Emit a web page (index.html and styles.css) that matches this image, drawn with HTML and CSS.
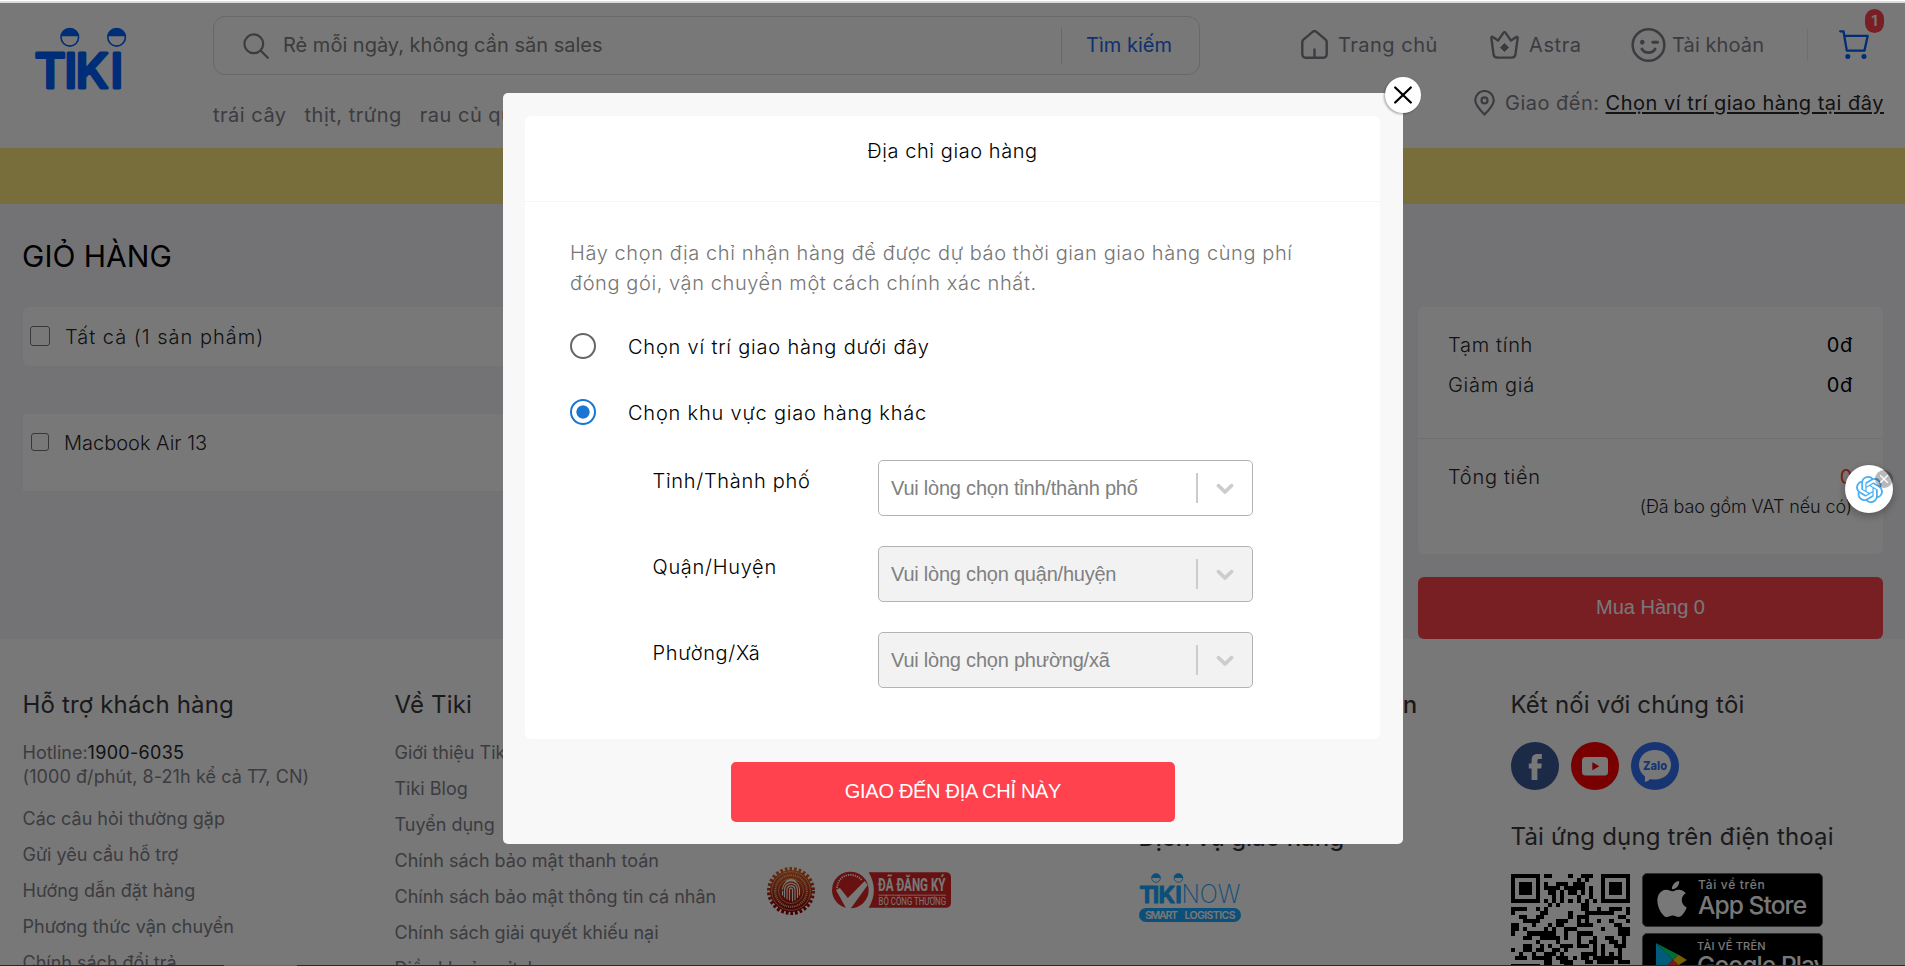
FILE: index.html
```html
<!DOCTYPE html>
<html lang="vi">
<head>
<meta charset="utf-8">
<title>Giỏ hàng | Tiki</title>
<link rel="stylesheet" href="styles.css">
</head>
<body>
<div class="page">
  <header class="header">
    <svg class="logo" viewBox="0 0 90 61" width="90" height="61">
      <g class="wordmark">
        <text class="wm" x="-1.500 28.300 39.500 74.200" y="59.500">TIKI</text>
      </g>
      <g fill="none" stroke="#0060ff" stroke-width="1.6">
        <circle cx="33.8" cy="9.3" r="8.8"/><circle cx="80.6" cy="9.3" r="8.8"/>
      </g>
      <path fill="#0060ff" d="M24.6 8.3a9.3 9.3 0 0 1 18.4 0zM71.4 8.3a9.3 9.3 0 0 1 18.4 0z"/>
    </svg>
    <div class="search-col">
      <div class="search">
        <svg class="search-icon" viewBox="0 0 26 26" width="26" height="26" fill="none" stroke="#808089" stroke-width="2.2" stroke-linecap="round"><circle cx="10.8" cy="10.8" r="9.4"/><path d="M17.8 17.8l7 7"/></svg>
        <span class="search-text">Rẻ mỗi ngày, không cần săn sales</span>
        <span class="search-btn">Tìm kiếm</span>
      </div>
      <div class="hot"><span>trái cây</span><span>thịt, trứng</span><span>rau củ quả</span></div>
    </div>
    <div class="right-col">
      <nav class="nav">
        <svg class="i-home" viewBox="0 0 27 29" width="27" height="29" fill="none" stroke="#808089" stroke-width="2.4" stroke-linejoin="round" stroke-linecap="round"><path d="M1.3 12.3c0-1 .4-1.900 1.100-2.600L11.300 2.100a3.300 3.300 0 0 1 4.400 0l8.900 7.600c.7.700 1.100 1.600 1.100 2.600v12.200a3.200 3.200 0 0 1-3.200 3.200h-18a3.200 3.200 0 0 1-3.200-3.200zM13.500 19.500v7.500"/></svg>
        <span class="t-home">Trang chủ</span>
        <svg class="i-astra" viewBox="0 0 29 28" width="29" height="28" fill="none" stroke="#808089" stroke-width="2.4" stroke-linejoin="round"><path d="M1.300 6.600c0-.9.900-1.100 1.500-.6l5.200 3.600 5.400-7.700c.5-.8 1.700-.8 2.200 0l5.400 7.700 5.200-3.600c.6-.5 1.500-.300 1.500.6l-2.200 16.500a4 4 0 0 1-4 3.500h-14a4 4 0 0 1-4-3.500z"/><path fill="#808089" stroke-width="1" d="M14.500 12.500l4 4-4 4-4-4z"/></svg>
        <span class="t-astra">Astra</span>
        <svg class="i-face" viewBox="0 0 36 36" width="35" height="36" fill="none" stroke="#808089" stroke-width="2.6" stroke-linecap="round"><circle cx="18" cy="18" r="16.300"/><path d="M11.300 22.200c2.600 4.800 10.800 4.800 13.400 0" stroke-width="3"/><path d="M22.500 15.200h4.800" stroke-width="3"/><ellipse cx="11.600" cy="15.200" rx="2.300" ry="2.500" fill="#808089" stroke="none"/></svg>
        <span class="t-acc">Tài khoản</span>
        <i class="nav-sep"></i>
        <span class="cart">
          <svg viewBox="0 0 30 29" width="30" height="29" fill="none" stroke="#0060ff" stroke-width="2.300" stroke-linejoin="round" stroke-linecap="round"><path d="M1.200 1.300h3.300l3.300 19.300h17.700l3.200-14.800H5.500"/><circle cx="8.800" cy="26.500" r="1.400" fill="#0060ff"/><circle cx="25" cy="26.500" r="1.400" fill="#0060ff"/></svg>
          <b class="badge">1</b>
        </span>
      </nav>
      <div class="location">
        <svg viewBox="0 0 21 26" width="21" height="26" fill="none" stroke="#808089" stroke-width="2.200"><path stroke-linejoin="round" d="M10.500 24.600C4.500 18.500 1.200 14.500 1.200 10.300a9.300 9.300 0 0 1 18.600 0c0 4.200-3.300 8.200-9.300 14.300z"/><circle cx="10.500" cy="10.400" r="3"/></svg>
        <span class="loc-label">Giao đến:</span><span class="loc-link">Chọn ví trí giao hàng tại đây</span>
      </div>
    </div>
  </header>
  <div class="banner"></div>
  <main class="main">
    <h1 class="title">GIỎ HÀNG</h1>
    <div class="cols">
      <div class="items">
        <div class="row row-all"><i class="check check-lg"></i><span class="all-text">Tất cả (1 sản phẩm)</span></div>
        <div class="row row-item"><i class="check"></i><span class="item-text">Macbook Air 13</span></div>
      </div>
      <div class="side">
        <div class="summary">
          <div class="line"><span>Tạm tính</span><b>0đ</b></div>
          <div class="line line-2"><span>Giảm giá</span><b>0đ</b></div>
          <div class="total">
            <div class="line"><span>Tổng tiền</span><b class="red">0</b></div>
            <p class="vat">(Đã bao gồm VAT nếu có)</p>
          </div>
        </div>
        <div class="buy">Mua Hàng 0</div>
      </div>
    </div>
  </main>
  <footer class="footer">
    <section>
      <h2 class="ft">Hỗ trợ khách hàng</h2>
      <div class="hotline"><p><span>Hotline:</span><b>1900-6035</b></p><p class="hours">(1000 đ/phút, 8-21h kể cả T7, CN)</p></div>
      <ul class="links links-1"><li>Các câu hỏi thường gặp</li><li>Gửi yêu cầu hỗ trợ</li><li>Hướng dẫn đặt hàng</li><li>Phương thức vận chuyển</li><li>Chính sách đổi trả</li></ul>
    </section>
    <section>
      <h2 class="ft">Về Tiki</h2>
      <ul class="links links-2"><li>Giới thiệu Tiki</li><li>Tiki Blog</li><li>Tuyển dụng</li><li>Chính sách bảo mật thanh toán</li><li>Chính sách bảo mật thông tin cá nhân</li><li>Chính sách giải quyết khiếu nại</li><li>Điều khoản sử dụng</li></ul>
    </section>
    <section class="certs">
      <svg viewBox="0 0 48 48" width="48" height="48">
        <defs><linearGradient id="seal" x1="0" y1="0" x2="0" y2="1"><stop offset="0" stop-color="#e0641c"/><stop offset=".5" stop-color="#b5320f"/><stop offset="1" stop-color="#8a0000"/></linearGradient></defs>
        <circle cx="24" cy="24" r="21" fill="url(#seal)"/>
        <circle cx="24" cy="24" r="22" fill="none" stroke="url(#seal)" stroke-width="4" stroke-dasharray="2.700 1.910"/>
        <circle cx="24" cy="24" r="19.300" fill="none" stroke="#f0d5c8" stroke-width=".6"/>
        <circle cx="24" cy="24" r="15.800" fill="none" stroke="#e8b8a0" stroke-width="2.200" stroke-dasharray="1 .9"/>
        <circle cx="24" cy="24" r="12.500" fill="none" stroke="#f0d5c8" stroke-width=".6"/>
        <g fill="none" stroke="#fff" stroke-width="1.100" stroke-linecap="round"><path d="M15.500 22c1-11 16-11 17 0v6M17.500 30v-7c0-9 13-9 13 0v7.500M20 32v-9c0-5.500 8-5.500 8 0v10M22.500 33v-10c0-2.500 3-2.500 3 0v11M15.500 24.500v3.500M19 14.500c3-2.300 7-2.300 10 0"/></g>
      </svg>
      <svg viewBox="0 0 120 46" width="119" height="46">
        <path fill="#dc2626" d="M37 5h78a5 5 0 0 1 5 5v26a5 5 0 0 1-5 5H37c7-12 7-24 0-36z"/>
        <circle cx="18.500" cy="23" r="18.500" fill="#dc2626"/>
        <path fill="none" stroke="#fff" stroke-width="1.800" stroke-dasharray="1.300 1" d="M5 21c2-16 18-16 25-8"/>
        <path fill="#fff" d="M4 23l4-2 8 10 17-17 3 4-18 25h-3z"/>
        <text class="reg-a" x="46.500" y="24" textLength="68" lengthAdjust="spacingAndGlyphs">ĐÃ ĐĂNG KÝ</text>
        <path stroke="#fff" stroke-width=".8" d="M47 28.200h68"/>
        <text class="reg-b" x="47" y="38" textLength="68" lengthAdjust="spacingAndGlyphs">BỘ CÔNG THƯƠNG</text>
      </svg>
    </section>
    <section>
      <h2 class="ft f4">Phương thức thanh toán</h2>
      <h2 class="ft f4b">Dịch vụ giao hàng</h2>
      <svg class="now" viewBox="0 0 102 49" width="102" height="49">
        <text class="now-a" x=".3 13.700 19.600 36.300" y="29.500">TIKI</text>
        <text class="now-b" x="42.500" y="30" textLength="59" lengthAdjust="spacingAndGlyphs">NOW</text>
        <g fill="none" stroke="#1ba8ff" stroke-width=".9"><circle cx="17" cy="5" r="4.300"/><circle cx="39.400" cy="5" r="4.300"/></g>
        <path fill="#1ba8ff" d="M12.400 5a4.600 4.600 0 0 1 9.200 0zM34.800 5a4.600 4.600 0 0 1 9.200 0z"/>
        <rect x="0" y="35" width="102" height="14" rx="7" fill="#1ba8ff"/>
        <text class="now-c" x="6" y="46" textLength="33">SMART</text><text class="now-c" x="45.500" y="46" textLength="51">LOGISTICS</text>
      </svg>
    </section>
    <section>
      <h2 class="ft">Kết nối với chúng tôi</h2>
      <div class="social">
        <svg viewBox="0 0 48 48" width="48" height="48"><circle cx="24" cy="24" r="24" fill="#3b5998"/><path fill="#fff" d="M20.600 38V26.500h-2.800v-5h2.800v-3.300c0-4 2-6.200 6-6.200h4.200v5h-2.600c-1.400 0-1.800.6-1.800 1.900v2.600h4.400l-.5 5h-3.900V38z"/></svg>
        <svg viewBox="0 0 48 48" width="48" height="48"><circle cx="24" cy="24" r="24" fill="#f00"/><rect x="11" y="15" width="26" height="18.500" rx="3.500" fill="#fff"/><path fill="#f00" d="M21.300 20.300l7 4-7 4z"/></svg>
        <svg viewBox="0 0 48 48" width="48" height="48"><circle cx="24" cy="24" r="24" fill="#3171f5"/><path fill="#fff" d="M24 8c9.500 0 16 6.500 16 14.800S33.500 37.500 24 37.500c-1.700 0-3.300-.2-4.700-.6-1.500 1.600-3.300 2.600-5.300 3-.3-1.400.2-3.600 0-5.500C10.500 31.800 8 27.800 8 22.800 8 14.500 14.500 8 24 8z"/><text class="zalo" x="12" y="27.800" textLength="24" lengthAdjust="spacingAndGlyphs">Zalo</text></svg>
      </div>
      <h2 class="ft f5b">Tải ứng dụng trên điện thoại</h2>
      <div class="apps">
        <svg viewBox="0 0 29 29" width="119" height="119" shape-rendering="crispEdges">
          <path fill="none" stroke="#000" stroke-width="1" d="M.500 .500h6v6h-6zM22.500 .500h6v6h-6zM2 2.500h3M2 3.500h3M2 4.500h3M24 2.500h3M24 3.500h3M24 4.500h3
          M8 .500h2M14 .500h1M17 .500h3M16 1.500h1M18 1.500h1M8 2.500h1M11 2.500h3M15 2.500h3M8 3.500h4M13 3.500h5M19 3.500h1M9 4.500h2M12 4.500h1M14 4.500h2M17 4.500h1M19 4.500h1M10 5.500h1M12 5.500h1M16 5.500h1M19 5.500h1M8 6.500h1M10 6.500h1M12 6.500h1M14 6.500h1M16 6.500h1M18 6.500h1M20 6.500h1M9 7.500h1M11 7.500h1M17 7.500h2
          M0 8.500h4M6 8.500h1M8 8.500h1M17 8.500h2M21 8.500h1M24 8.500h3M28 8.500h1M0 9.500h1M7 9.500h2M14 9.500h1M18 9.500h7M28 9.500h1M2 10.500h2M6 10.500h2M14 10.500h1M16 10.500h3M26 10.500h2M3 11.500h4M11 11.500h3M16 11.500h1M18 11.500h1M21 11.500h1M24 11.500h1M28 11.500h1M0 12.500h2M5 12.500h1M9 12.500h1M11 12.500h2M16 12.500h4M25 12.500h2
          M0 13.500h2M3 13.500h1M8 13.500h1M10 13.500h1M13 13.500h3M22 13.500h1M26 13.500h3M0 14.500h1M4 14.500h7M13 14.500h1M16 14.500h4M26 14.500h3M3 15.500h2M7 15.500h5M13 15.500h1M16 15.500h1M20 15.500h1M23 15.500h2M27 15.500h1M6 16.500h1M11 16.500h1M16 16.500h1M19 16.500h2M24 16.500h2M27 16.500h1M3 17.500h2M7 17.500h1M9 17.500h1M12 17.500h3M16 17.500h3M20 17.500h1M22 17.500h1M25 17.500h3
          M0 18.500h1M3 18.500h2M6 18.500h2M10 18.500h2M13 18.500h1M20 18.500h1M22 18.500h1M26 18.500h1M2 19.500h1M5 19.500h1M8 19.500h3M12 19.500h1M17 19.500h4M22 19.500h1M24 19.500h1M26 19.500h1M1 20.500h3M5 20.500h5M11 20.500h3M15 20.500h1M17 20.500h2M20 20.500h7M8 21.500h2M12 21.500h3M18 21.500h2M21 21.500h4M26 21.500h3M0 22.500h7M8 22.500h2M13 22.500h2"/>
        </svg>
        <div class="stores">
          <div class="store">
            <svg class="apple" viewBox="0 0 24 24" width="36" height="36" fill="#fff"><path d="M12.152 6.896c-.948 0-2.415-1.078-3.960-1.040-2.040.027-3.910 1.183-4.961 3.014-2.117 3.675-.546 9.103 1.519 12.090 1.013 1.454 2.208 3.090 3.792 3.039 1.520-.065 2.090-.987 3.935-.987 1.831 0 2.350.987 3.960.948 1.637-.026 2.676-1.480 3.676-2.948 1.156-1.688 1.636-3.325 1.662-3.415-.039-.013-3.182-1.221-3.220-4.857-.026-3.040 2.480-4.494 2.597-4.559-1.429-2.090-3.623-2.324-4.390-2.376-2-.156-3.675 1.090-4.610 1.090zM15.530 3.830c.843-1.012 1.400-2.427 1.245-3.830-1.207.052-2.662.805-3.532 1.818-.780.896-1.454 2.338-1.273 3.714 1.338.104 2.715-.805 3.560-1.702"/></svg>
            <div class="store-text"><small class="s-ios">Tải về trên</small><span>App Store</span></div>
          </div>
          <div class="store">
            <svg class="play" viewBox="0 0 34 38" width="32" height="36"><path fill="#00c3ff" d="M1 1v36l18-18z"/><path fill="#00e37a" d="M1 1l18 18 6-5.500z"/><path fill="#ffc800" d="M25 13.500L34 19l-9 5.500-6-5.500z"/><path fill="#ff3a44" d="M1 37l18-18 6 5.500z"/></svg>
            <div class="store-text play-text"><small class="s-gp">TẢI VỀ TRÊN</small><span>Google Play</span></div>
          </div>
        </div>
      </div>
    </section>
  </footer>
</div>

<div class="backdrop">
  <div class="modal">
    <svg class="close" viewBox="0 0 36 36" width="36" height="36"><circle cx="18" cy="18" r="18" fill="#fff"/><path d="M10.200 10.500l15.600 15M25.800 10.500l-15.600 15" stroke="#000" stroke-width="2.300" stroke-linecap="round"/></svg>
    <div class="card">
      <h3 class="m-title"><span>Địa chỉ giao hàng</span></h3>
      <div class="m-body">
        <p class="desc"><span>Hãy chọn địa chỉ nhận hàng để được dự báo thời gian giao hàng cùng phí</span><br><span>đóng gói, vận chuyển một cách chính xác nhất.</span></p>
        <div class="opt opt-1"><i class="radio"></i><span>Chọn ví trí giao hàng dưới đây</span></div>
        <div class="opt opt-2"><i class="radio on"></i><span>Chọn khu vực giao hàng khác</span></div>
        <div class="fields">
          <div class="field"><label>Tỉnh/Thành phố</label><div class="select"><span>Vui lòng chọn tỉnh/thành phố</span><i class="sep"></i><svg viewBox="0 0 20 20" width="28" height="28" fill="#ccc" stroke="#ccc" stroke-width=".5"><path d="M4.516 7.548c.436-.446 1.043-.481 1.576 0l3.908 3.747 3.908-3.747c.533-.481 1.141-.446 1.574 0 .436.445.408 1.197 0 1.615-.406.418-4.695 4.502-4.695 4.502-.217.223-.502.335-.787.335s-.570-.112-.789-.335c0 0-4.287-4.084-4.695-4.502s-.436-1.170 0-1.615z"/></svg></div></div>
          <div class="field"><label>Quận/Huyện</label><div class="select off"><span>Vui lòng chọn quận/huyện</span><i class="sep"></i><svg viewBox="0 0 20 20" width="28" height="28" fill="#ccc" stroke="#ccc" stroke-width=".5"><path d="M4.516 7.548c.436-.446 1.043-.481 1.576 0l3.908 3.747 3.908-3.747c.533-.481 1.141-.446 1.574 0 .436.445.408 1.197 0 1.615-.406.418-4.695 4.502-4.695 4.502-.217.223-.502.335-.787.335s-.570-.112-.789-.335c0 0-4.287-4.084-4.695-4.502s-.436-1.170 0-1.615z"/></svg></div></div>
          <div class="field"><label>Phường/Xã</label><div class="select off"><span>Vui lòng chọn phường/xã</span><i class="sep"></i><svg viewBox="0 0 20 20" width="28" height="28" fill="#ccc" stroke="#ccc" stroke-width=".5"><path d="M4.516 7.548c.436-.446 1.043-.481 1.576 0l3.908 3.747 3.908-3.747c.533-.481 1.141-.446 1.574 0 .436.445.408 1.197 0 1.615-.406.418-4.695 4.502-4.695 4.502-.217.223-.502.335-.787.335s-.570-.112-.789-.335c0 0-4.287-4.084-4.695-4.502s-.436-1.170 0-1.615z"/></svg></div></div>
        </div>
      </div>
    </div>
    <div class="submit"><span>GIAO ĐẾN ĐỊA CHỈ NÀY</span></div>
  </div>
</div>
<div class="ext">
  <svg viewBox="0 0 24 24" width="27" height="27" fill="#4ab0f5"><path d="M22.282 9.821a5.985 5.985 0 0 0-.516-4.910 6.046 6.046 0 0 0-6.510-2.900A6.065 6.065 0 0 0 4.981 4.182a5.985 5.985 0 0 0-3.998 2.900 6.046 6.046 0 0 0 .743 7.097 5.980 5.980 0 0 0 .511 4.911 6.051 6.051 0 0 0 6.515 2.900A5.985 5.985 0 0 0 13.260 24a6.056 6.056 0 0 0 5.772-4.206 5.990 5.990 0 0 0 3.998-2.900 6.056 6.056 0 0 0-.748-7.073zm-9.022 12.608a4.476 4.476 0 0 1-2.876-1.041l.142-.080 4.778-2.758a.795.795 0 0 0 .393-.681v-6.737l2.020 1.169a.071.071 0 0 1 .038.052v5.583a4.504 4.504 0 0 1-4.495 4.494zM3.600 18.304a4.471 4.471 0 0 1-.535-3.014l.142.085 4.783 2.758a.771.771 0 0 0 .781 0l5.843-3.369v2.332a.080.080 0 0 1-.033.062L9.740 19.950a4.499 4.499 0 0 1-6.140-1.646zM2.341 7.896a4.485 4.485 0 0 1 2.365-1.973V11.600a.766.766 0 0 0 .388.677l5.814 3.354-2.020 1.169a.076.076 0 0 1-.071 0l-4.830-2.787A4.504 4.504 0 0 1 2.341 7.872zm16.596 3.856L13.104 8.364 15.119 7.200a.076.076 0 0 1 .071 0l4.830 2.791a4.494 4.494 0 0 1-.676 8.104v-5.677a.790.790 0 0 0-.407-.667zm2.011-3.023l-.142-.085-4.774-2.782a.776.776 0 0 0-.785 0L9.409 9.230V6.897a.066.066 0 0 1 .028-.061l4.830-2.787a4.499 4.499 0 0 1 6.680 4.660zM8.307 12.863l-2.020-1.164a.080.080 0 0 1-.038-.057V6.074a4.499 4.499 0 0 1 7.376-3.454l-.142.081L8.704 5.459a.795.795 0 0 0-.393.681zm1.098-2.365l2.602-1.500 2.607 1.500v2.999l-2.597 1.500-2.607-1.500z"/></svg>
  <svg class="ext-x" viewBox="0 0 18 18" width="18" height="18"><circle cx="9" cy="9" r="9" fill="#000" fill-opacity=".28"/><path d="M5.200 5.200l7.600 7.600M12.800 5.200l-7.600 7.600" stroke="#fff" stroke-width="1.300"/></svg>
</div>
<div class="edge-top"></div>
<div class="edge-bottom"><i></i></div>
</body>
</html>
```
FILE: styles.css
```css
* { box-sizing: border-box; margin: 0; padding: 0; }
body { width: 1905px; height: 966px; overflow: hidden; font-family: Inter, "Noto Sans", sans-serif; font-size: 20px; line-height: 24px; color: #27272a; background: #fff; }
span, p, li, h1, h2, label { white-space: nowrap; }
ul { list-style: none; }
svg { display: block; flex: none; }
.page { height: 966px; overflow: hidden; padding-top: 3px; display: flex; flex-direction: column; }

.header { flex: none; height: 145px; display: flex; align-items: flex-start; padding: 13px 21px 0 36px; color: #808089; }
.logo { margin-top: 12px; overflow: visible; }
.wm { font-size: 48px; font-weight: 500; fill: #0060ff; stroke: #0060ff; stroke-width: 3px; stroke-linejoin: round; }
.search-col { width: 987px; margin-left: 87px; }
.search { height: 59px; border: 1px solid #dddde3; border-radius: 12px; display: flex; align-items: center; padding-left: 29px; }
.search-text { margin: 0 0 2px 14px; color: #808080; }
.search-btn { margin-left: auto; width: 138px; height: 36px; line-height: 34px; border-left: 1px solid #dddde3; padding-left: 24px; color: #2468e8; }
.hot { display: flex; gap: 18px; margin-top: 28px; letter-spacing: .5px; }
.right-col { width: 583px; margin-left: 101px; }
.nav { height: 57px; display: flex; align-items: center; }
.t-home { width: 100px; margin: 0 52px 0 10px; letter-spacing: .5px; }
.t-astra { width: 54px; margin: 0 48px 0 10px; letter-spacing: .6px; }
.t-acc { width: 92px; margin: 0 43px 0 6px; letter-spacing: .1px; }
.nav-sep { width: 1px; height: 32px; background: #ebebf0; margin-right: 31px; }
.cart { position: relative; }
.badge { position: absolute; left: 26px; top: -21px; width: 19px; height: 24px; border-radius: 10px; background: #ff424f; color: #fff; font-size: 15px; font-weight: 600; text-align: center; }
.location { height: 24px; margin-top: 18px; display: flex; align-items: center; justify-content: flex-end; letter-spacing: .5px; }
.loc-label { margin: 0 6px 0 10px; }
.loc-link { color: #27272a; text-decoration: underline; text-underline-offset: 2px; }
.banner { flex: none; height: 56px; background: #fdea7d; }

.main { flex: none; height: 435px; background: #f5f5fa; padding: 34px 22px 0 23px; }
.title { margin-left: -1px; font-size: 30px; line-height: 36px; font-weight: 400; color: #000; }
.cols { display: flex; justify-content: space-between; margin-top: 33px; }
.items { width: 1375px; }
.row { display: flex; background: #fff; }
.row-all { height: 59px; border-radius: 6px; padding: 18px 0 0 7px; margin-bottom: 48px; }
.row-item { height: 77px; padding: 17px 0 0 8px; }
.check { width: 18px; height: 18px; border: 1px solid #767676; border-radius: 3px; margin: 2px 15px 0 0; }
.check-lg { width: 20px; height: 20px; margin: 1px 15px 0 0; }
.all-text, .item-text { font-weight: 300; }
.all-text { letter-spacing: 1px; }
.side { width: 465px; }
.summary { height: 247px; background: #fff; border-radius: 6px; padding-top: 26px; font-weight: 300; }
.line { display: flex; justify-content: space-between; padding: 0 30px 0 30px; letter-spacing: .7px; }
.line b { font-weight: 400; color: #000; }
.line-2 { margin-top: 16px; }
.total { margin-top: 41px; border-top: 1px solid #ebebf0; padding-top: 26px; }
.line .red { color: #fe3834; }
.vat { margin-top: 6px; padding-right: 31px; text-align: right; font-size: 18px; letter-spacing: -.1px; }
.buy { margin-top: 23px; height: 62px; line-height: 61px; border-radius: 6px; background: #ff424e; color: #fff; text-align: center; font-family: "Liberation Sans", Arial, sans-serif; }

.footer { flex: none; height: 360px; display: grid; grid-template-columns: repeat(5, 372px); padding: 50px 0 0 23px; background: #fff; color: #808089; font-size: 18px; }
.ft { position: relative; top: 1px; text-indent: -.5px; font-size: 24px; line-height: 30px; font-weight: 400; letter-spacing: .17px; color: #38383d; }
.hotline { margin-top: 22px; text-indent: -.5px; }
.hotline b { font-weight: 400; color: #27272a; letter-spacing: .3px; }
.hours { letter-spacing: .08px; }
.links li { line-height: 36px; text-indent: -.5px; }
.links-1 { margin-top: 12px; }
.links-2 { margin-top: 16px; }
.certs { display: flex; gap: 17px; padding-top: 178px; align-items: flex-start; }
.reg-a { font: 700 18px Roboto, sans-serif; fill: #fff; }
.reg-b { font: 400 10.5px Roboto, sans-serif; fill: #fff; }
.f4 { font-weight: 500; letter-spacing: .2px; }
.f4b { margin-top: 103px; font-weight: 500; letter-spacing: 0; }
.now { margin-top: 21px; overflow: visible; }
.now-a { font-size: 23.500px; font-weight: 600; fill: #1ba8ff; stroke: #1ba8ff; stroke-width: 1.200px; stroke-linejoin: round; }
.now-b { font-size: 25.500px; font-weight: 200; fill: #1ba8ff; }
.now-c { font-size: 10.500px; font-weight: 600; fill: #fff; }
.social { display: flex; gap: 12px; margin-top: 23px; }
.zalo { font-size: 12px; font-weight: 800; fill: #3171f5; }
.f5b { margin-top: 31px; }
.apps { display: flex; gap: 12px; margin-top: 22px; }
.apps > svg { margin-top: 1px; }
.stores { display: flex; flex-direction: column; gap: 6px; }
.store { width: 181px; height: 54px; border-radius: 5px; border: 1px solid #666; background: #000; color: #fff; display: flex; padding-left: 11px; }
.apple { margin-top: 7px; }
.play { margin: 8px 0 0 1px; }
.store-text { display: flex; flex-direction: column; margin-left: 8px; }
.store-text small { font-size: 12px; line-height: 14px; margin-top: 4px; letter-spacing: .7px; font-weight: 500; }
.store-text span { font-size: 24.500px; line-height: 27px; letter-spacing: -.9px; font-weight: 500; }
.play-text { margin-left: 10px; }
.play-text .s-gp { font-size: 11px; letter-spacing: .2px; margin-top: 5px; }
.play-text span { line-height: 25px; }

.backdrop { position: fixed; inset: 0; background: rgba(0, 0, 0, .53); display: flex; justify-content: center; align-items: flex-start; padding: 93px 0 0 1px; }
.modal { position: relative; width: 900px; height: 751px; border-radius: 5px; background: #f8f8f8; padding: 23px 23px 0 22px; }
.close { position: absolute; right: -18px; top: -16px; filter: drop-shadow(-1px 1px 1px rgba(0, 0, 0, .35)); }
.card { height: 623px; border-radius: 6px; background: #fff; color: #000; font-weight: 300; }
.m-title { height: 86px; border-bottom: 1px solid #f5f5f5; text-align: center; font-size: 20px; font-weight: 300; letter-spacing: .57px; padding-top: 23px; }
.m-body { padding: 36px 0 0 45px; }
.desc { line-height: 30px; color: #757575; letter-spacing: .59px; }
.opt { display: flex; align-items: center; height: 26px; letter-spacing: .8px; }
.opt span { padding-top: 1px; }
.opt-1 { margin-top: 35px; }
.opt-2 { margin-top: 40px; }
.radio { width: 26px; height: 26px; border: 2.500px solid #666; border-radius: 50%; margin-right: 32px; }
.radio.on { border-color: #1976d2; background: radial-gradient(circle, #1976d2 6.200px, transparent 7px); }
.fields { display: flex; flex-direction: column; gap: 30px; margin: 35px 0 0 83px; }
.field { display: flex; height: 56px; }
.field label { width: 225px; padding-top: 9px; letter-spacing: .7px; text-indent: -.5px; }
.select { width: 375px; height: 56px; border: 1px solid #b3b3b3; border-radius: 5px; display: flex; align-items: center; padding: 0 13px 0 12px; color: #808080; font-weight: 400; font-family: "Liberation Sans", Arial, sans-serif; letter-spacing: -.22px; }
.select.off { background: #f2f2f2; }
.select .sep { width: 2px; height: 30px; background: #ccc; margin: 0 13px 0 auto; }
.submit { width: 444px; height: 60px; margin: 23px auto 0 206px; border-radius: 5px; background: #ff424e; color: #fff; text-align: center; line-height: 58px; font-family: "Liberation Sans", Arial, sans-serif; letter-spacing: -.3px; }
.ext { position: fixed; left: 1845px; top: 465px; width: 48px; height: 48px; border-radius: 50%; background: #fff; display: flex; align-items: center; justify-content: center; box-shadow: 0 3px 10px rgba(0, 0, 0, .3); }
.ext-x { position: absolute; left: 30px; top: 5px; }
.edge-top { position: fixed; inset: 0 0 auto; height: 3px; background: #dcdcdc; border-top: 1px solid #fff; }
.edge-bottom { position: fixed; inset: auto 0 0; height: 1px; background: #2b2b2b; padding-left: 224px; }
.edge-bottom i { display: block; width: 73px; height: 1px; background: #666; }
```
